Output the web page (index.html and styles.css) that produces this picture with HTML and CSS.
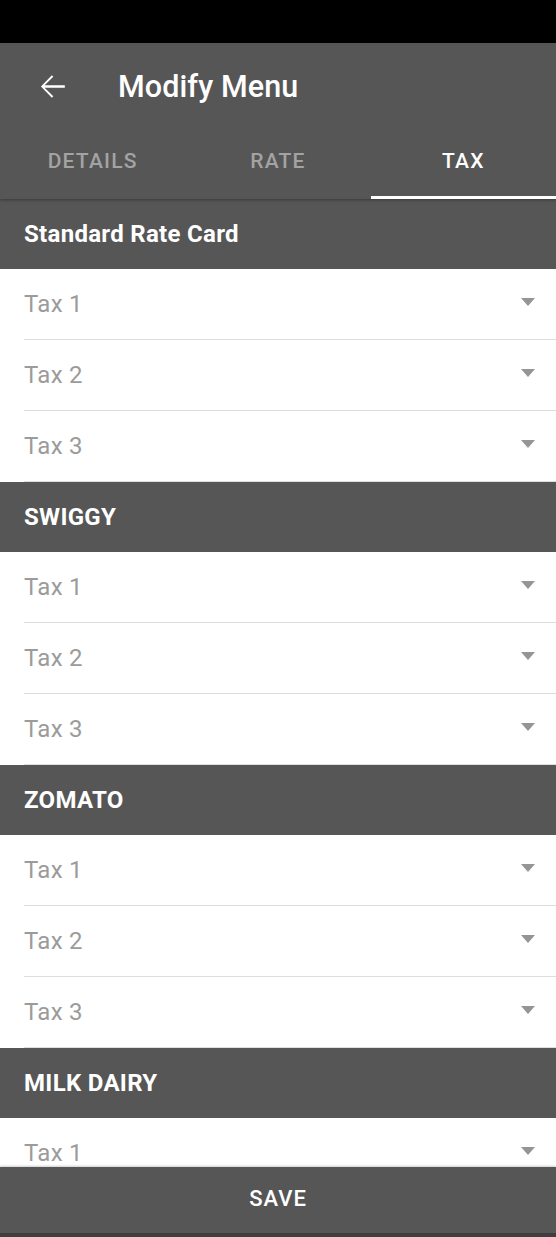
FILE: index.html
```html
<!DOCTYPE html>
<html lang="en">
<head>
    <meta charset="UTF-8">
    <meta name="viewport" content="width=device-width, initial-scale=1.0">
    <title>Modify Menu</title>
    <link rel="stylesheet" href="styles.css">
</head>
<body>
    <div id="app">
        <div class="status-bar"></div>

        <div class="top">
            <div class="toolbar">
                <svg class="back" viewBox="0 0 24 24" width="37" height="37">
                    <path fill="#fff" d="M20 11.25H6.9l5.6-5.6-.9-.9L4.5 12l7.1 7.25.9-.9-5.6-5.6H20z"/>
                </svg>
                <h1>Modify Menu</h1>
            </div>
            <div class="tabs">
                <div class="tab">DETAILS</div>
                <div class="tab">RATE</div>
                <div class="tab active">TAX</div>
            </div>
        </div>

        <div class="list">
            <div class="group">
                <div class="group-title">Standard Rate Card</div>
                <div class="row"><span>Tax 1</span><i class="caret"></i></div>
                <div class="row"><span>Tax 2</span><i class="caret"></i></div>
                <div class="row"><span>Tax 3</span><i class="caret"></i></div>
            </div>
            <div class="group">
                <div class="group-title">SWIGGY</div>
                <div class="row"><span>Tax 1</span><i class="caret"></i></div>
                <div class="row"><span>Tax 2</span><i class="caret"></i></div>
                <div class="row"><span>Tax 3</span><i class="caret"></i></div>
            </div>
            <div class="group">
                <div class="group-title">ZOMATO</div>
                <div class="row"><span>Tax 1</span><i class="caret"></i></div>
                <div class="row"><span>Tax 2</span><i class="caret"></i></div>
                <div class="row"><span>Tax 3</span><i class="caret"></i></div>
            </div>
            <div class="group">
                <div class="group-title">MILK DAIRY</div>
                <div class="row"><span>Tax 1</span><i class="caret"></i></div>
            </div>
        </div>

        <div class="save">SAVE</div>
        <div class="nav-strip"></div>
    </div>
</body>
</html>
```

FILE: styles.css
```css
* {
    box-sizing: border-box;
}
body {
    margin: 0;
    background: #fff;
    font-family: Roboto, "Noto Sans", Arial, sans-serif;
}
#app {
    display: flex;
    flex-direction: column;
    height: 1237px;
    overflow: hidden;
}
.status-bar {
    height: 43px;
    flex: none;
    background: #000;
}
.top {
    flex: none;
    background: #565656;
    position: relative;
    z-index: 2;
    box-shadow: 0 1px 3px rgba(0, 0, 0, .35);
}
.toolbar {
    height: 87px;
    display: flex;
    align-items: center;
    padding-left: 34px;
}
.toolbar .back {
    flex: none;
}
.toolbar h1 {
    margin: 0 0 0 47px;
    color: #fff;
    font-size: 30.5px;
    font-weight: 500;
    letter-spacing: .1px;
}
.tabs {
    display: flex;
    height: 69px;
}
.tab {
    flex: 1;
    display: flex;
    align-items: center;
    justify-content: center;
    padding-bottom: 5px;
    border-bottom: 3px solid transparent;
    color: #a3a3a3;
    font-size: 21px;
    font-weight: 500;
    letter-spacing: 1.2px;
}
.tab.active {
    color: #fff;
    border-bottom-color: #fff;
}
.list {
    flex: 1;
    overflow: hidden;
}
.group-title {
    height: 70px;
    display: flex;
    align-items: center;
    padding-left: 24px;
    background: #565656;
    color: #fff;
    font-size: 24px;
    font-weight: 700;
    letter-spacing: .3px;
}
.row {
    height: 71px;
    margin-left: 24px;
    padding-right: 21px;
    display: flex;
    align-items: center;
    justify-content: space-between;
    border-bottom: 1px solid #dedede;
    color: #9b9b9b;
    font-size: 24px;
    letter-spacing: .3px;
}
.caret {
    width: 0;
    height: 0;
    border-left: 7px solid transparent;
    border-right: 7px solid transparent;
    border-top: 8px solid #959595;
    margin-top: -5px;
}
.save {
    flex: none;
    height: 66px;
    display: flex;
    align-items: center;
    justify-content: center;
    padding-bottom: 3px;
    background: #565656;
    color: #fff;
    font-size: 22px;
    font-weight: 500;
    letter-spacing: 1px;
    box-shadow: 0 -1px 2px rgba(0, 0, 0, .2);
    position: relative;
}
.nav-strip {
    flex: none;
    height: 4px;
    background: #3e3e3e;
}
```
